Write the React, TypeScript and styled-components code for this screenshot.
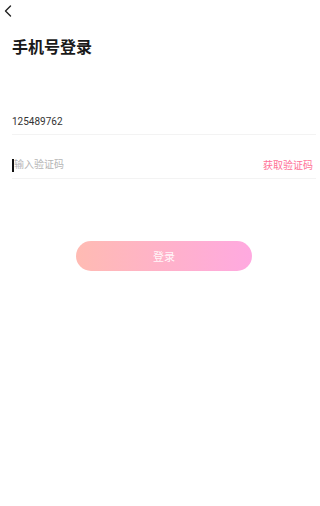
import React, { useState } from "react";
import styled, { createGlobalStyle } from "styled-components";

const GlobalStyle = createGlobalStyle`
  html, body {
    margin: 0;
    padding: 0;
    background: #ffffff;
    font-family: Roboto, "Noto Sans CJK SC", "Noto Sans", sans-serif;
  }
`;

const Page = styled.div`
  width: 320px;
  min-height: 506px;
  background: #ffffff;
  box-sizing: border-box;
`;

const NavBar = styled.div`
  height: 22px;
  display: flex;
  align-items: flex-start;
  padding: 4px 0 0 2px;
  box-sizing: border-box;
`;

const BackButton = styled.button`
  border: none;
  background: none;
  padding: 0;
  width: 12px;
  height: 14px;
  display: flex;
  align-items: center;
  justify-content: center;
  cursor: pointer;
`;

const Title = styled.h1`
  margin: 14px 0 0 12px;
  font-size: 16px;
  line-height: 24px;
  font-weight: 700;
  color: #1a1a1a;
`;

const Form = styled.div`
  margin-top: 31px;
  padding: 0 4px 0 12px;
  display: flex;
  flex-direction: column;
`;

const Row = styled.div`
  height: 44px;
  display: flex;
  align-items: flex-end;
  justify-content: space-between;
  padding-bottom: 6px;
  box-sizing: border-box;
  border-bottom: 1px solid #f3f3f3;
`;

const Value = styled.span`
  font-size: 10px;
  line-height: 12px;
  color: #333333;
`;

const Field = styled.div`
  display: flex;
  align-items: center;
  height: 14px;
`;

const Caret = styled.span`
  display: inline-block;
  width: 2px;
  height: 13px;
  background: #111111;
`;

const Placeholder = styled.span<{ $empty: boolean }>`
  font-size: 10px;
  line-height: 12px;
  color: ${(props) => (props.$empty ? "#b5b5b5" : "#333333")};
`;

const CodeLink = styled.span`
  font-size: 10px;
  line-height: 12px;
  color: #ff7197;
  padding-right: 3px;
  cursor: pointer;
`;

const Actions = styled.div`
  margin-top: 62px;
  padding: 0 4px 0 12px;
  display: flex;
  justify-content: center;
`;

const LoginButton = styled.button`
  width: 176px;
  height: 30px;
  border: none;
  border-radius: 15px;
  background: linear-gradient(90deg, #ffbbb3 0%, #ffa9e0 100%);
  color: rgba(255, 255, 255, 0.92);
  font-family: inherit;
  font-size: 11px;
  cursor: pointer;
`;

const ChevronLeft = () => (
  <svg width="8" height="12" viewBox="0 0 8 12" fill="none">
    <path d="M6.5 1L1.5 6L6.5 11" stroke="#222" strokeWidth="1.4" strokeLinecap="round" strokeLinejoin="round" />
  </svg>
);

export default function App() {
  const [phone] = useState("125489762");
  const [code] = useState("");

  return (
    <Page>
      <GlobalStyle />
      <NavBar>
        <BackButton aria-label="back">
          <ChevronLeft />
        </BackButton>
      </NavBar>
      <Title>手机号登录</Title>
      <Form>
        <Row>
          <Value>{phone}</Value>
        </Row>
        <Row>
          <Field>
            <Caret />
            <Placeholder $empty={!code}>{code || "输入验证码"}</Placeholder>
          </Field>
          <CodeLink>获取验证码</CodeLink>
        </Row>
      </Form>
      <Actions>
        <LoginButton>登录</LoginButton>
      </Actions>
    </Page>
  );
}
